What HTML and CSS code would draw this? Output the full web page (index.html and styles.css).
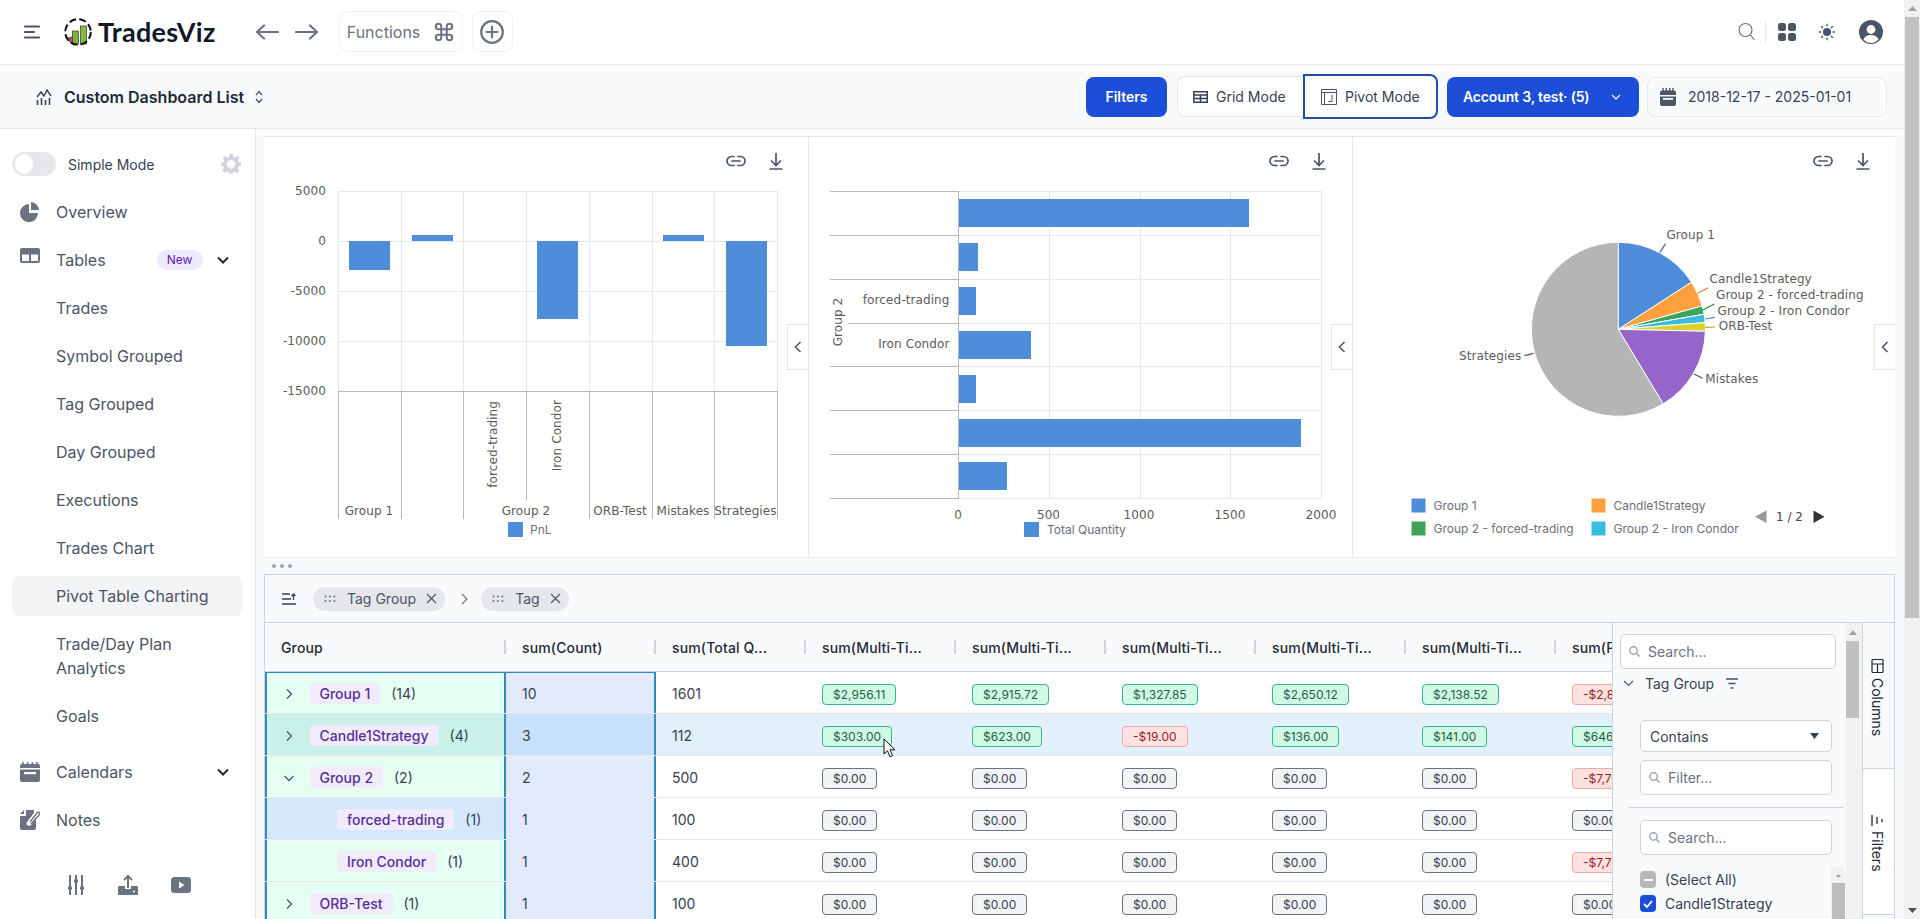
FILE: index.html
```html
<!DOCTYPE html>
<html lang="en">
<head>
<meta charset="utf-8">
<title>TradesViz</title>
<link rel="stylesheet" href="styles.css">
</head>
<body>
<div class="page">
  <header class="topbar">
    <svg class="burger" width="16" height="14" viewBox="0 0 16 14"><path d="M1 1.5h14M1 7h9M1 12.5h14" stroke="#4b5563" stroke-width="2.2" stroke-linecap="round" fill="none"/></svg>
    <svg class="logo" width="28" height="28" viewBox="0 0 28 28"><path d="M2 20l5 6 2-1V18z" fill="#a8525a"/><rect x="8.5" y="13" width="6" height="13" fill="#7fb23a" stroke="#333" stroke-width=".7"/><rect x="16.5" y="8" width="6" height="18" fill="#86b93e" stroke="#333" stroke-width=".7"/><circle cx="14" cy="14" r="12.8" fill="none" stroke="#111" stroke-width="2" stroke-dasharray="7 3.2"/></svg>
    <span class="brand">TradesViz</span>
    <svg class="arrow-l" width="24" height="16" viewBox="0 0 24 16"><path d="M23 8H2M9 1.5L2 8l7 6.500" fill="none" stroke="#6b7280" stroke-width="2.200" stroke-linecap="round" stroke-linejoin="round"/></svg>
    <svg class="arrow-r" width="24" height="16" viewBox="0 0 24 16"><path d="M1 8h21M15 1.500L22 8l-7 6.500" fill="none" stroke="#6b7280" stroke-width="2.200" stroke-linecap="round" stroke-linejoin="round"/></svg>
    <div class="fn-box"><span>Functions</span><svg width="22" height="22" viewBox="0 0 24 24"><path d="M18 3a3 3 0 0 0-3 3v12a3 3 0 0 0 3 3 3 3 0 0 0 3-3 3 3 0 0 0-3-3H6a3 3 0 0 0-3 3 3 3 0 0 0 3 3 3 3 0 0 0 3-3V6a3 3 0 0 0-3-3 3 3 0 0 0-3 3 3 3 0 0 0 3 3h12a3 3 0 0 0 3-3 3 3 0 0 0-3-3z" fill="none" stroke="#6b7280" stroke-width="2.200"/></svg></div>
    <div class="plus-box"><svg width="26" height="26" viewBox="0 0 26 26"><circle cx="13" cy="13" r="10.800" fill="none" stroke="#6b7280" stroke-width="2.200"/><path d="M13 7.500v11M7.500 13h11" stroke="#6b7280" stroke-width="2.200" stroke-linecap="round"/></svg></div>
    <div class="top-right">
      <svg width="20" height="20" viewBox="0 0 20 20"><circle cx="8.500" cy="8" r="6.500" fill="none" stroke="#6b7280" stroke-width="1.200"/><path d="M13.500 13l4 5" stroke="#6b7280" stroke-width="1.200"/></svg>
      <span class="top-sep"></span>
      <svg class="apps" width="20" height="20" viewBox="0 0 20 20" fill="#4b5563"><rect x="1" y="1" width="8" height="8" rx="2.500"/><rect x="11" y="1" width="8" height="8" rx="2.500"/><rect x="1" y="11" width="8" height="8" rx="2.500"/><rect x="11" y="11" width="8" height="8" rx="2.500"/></svg>
      <svg class="sun" width="18" height="18" viewBox="0 0 18 18"><circle cx="9" cy="9" r="4" fill="#4b5563"/><path d="M9 .8v2.400M9 14.800v2.400M.8 9h2.400M14.800 9h2.400M3.200 3.200l1.700 1.700M13.100 13.100l1.700 1.700M3.200 14.800l1.700-1.700M13.100 4.900l1.700-1.700" stroke="#4b5563" stroke-width="1.400"/></svg>
      <svg class="avatar" width="24" height="24" viewBox="0 0 24 24"><circle cx="12" cy="12" r="12" fill="#4b5563"/><circle cx="12" cy="9.500" r="4.400" fill="#fff"/><path d="M4.500 19.500c1.500-3.500 4.500-4.500 7.500-4.500s6 1 7.500 4.500C17.500 22 14.500 23 12 23s-5.500-1-7.500-3.500z" fill="#fff"/></svg>
    </div>
  </header>

  <div class="subbar">
    <svg class="dash-ico" width="16" height="16" viewBox="0 0 16 16"><path d="M1 8l4-5 3 4 3-6 4 6" fill="none" stroke="#374151" stroke-width="1.400"/><path d="M1.500 11v5M5.500 9v7M9.500 11v5M13.500 9v7" stroke="#374151" stroke-width="1.600"/></svg>
    <span class="dash-title">Custom Dashboard List</span>
    <svg class="updown" width="8" height="14" viewBox="0 0 8 14"><path d="M1 5l3-3.500L7 5M1 9l3 3.500L7 9" fill="none" stroke="#4b5563" stroke-width="1.300"/></svg>
    <div class="sub-actions">
      <button class="btn-primary btn-filters">Filters</button>
      <div class="mode-group">
        <button class="mode mode-grid"><svg width="15" height="12" viewBox="0 0 15 12"><path d="M.8.800h13.400v10.400H.8zM.8 4h13.400M.8 7.500h13.400M7.500 4v7" fill="none" stroke="#374151" stroke-width="1.500"/></svg>Grid Mode</button>
        <button class="mode mode-pivot"><svg width="16" height="16" viewBox="0 0 16 16"><path d="M.5.500h15v15H.500zM3.500 3.500v12M.5 3.500h15M11 6v6.500H7.500" fill="none" stroke="#4b5563" stroke-width="1"/></svg>Pivot Mode</button>
      </div>
      <button class="btn-primary btn-account"><span>Account 3, test· (5)</span><svg width="10" height="6" viewBox="0 0 10 6"><path d="M1 1l4 4 4-4" fill="none" stroke="#fff" stroke-width="1.200"/></svg></button>
      <div class="date-box"><svg width="16" height="20" viewBox="0 0 16 20"><path d="M3 1v3M6.300 1v3M9.700 1v3M13 1v3" stroke="#4b5563" stroke-width="1.400"/><path d="M0 5.500a2 2 0 0 1 2-2h12a2 2 0 0 1 2 2V8H0zM0 9.500h16V17a2 2 0 0 1-2 2H2a2 2 0 0 1-2-2z" fill="#4b5563"/><rect x="3" y="11" width="10" height="1.800" fill="#fff"/></svg><span>2018-12-17 - 2025-01-01</span></div>
    </div>
  </div>

  <div class="layout">
    <aside class="sidebar">
      <div class="simple-row">
        <span class="toggle"><span class="knob"></span></span>
        <span class="simple-label">Simple Mode</span>
        <svg class="gear" width="20" height="20" viewBox="0 0 20 20"><path fill-rule="evenodd" d="M8.300 0h3.400l.5 2.700 1.700.7 2.300-1.600 2.400 2.400-1.600 2.300.7 1.700L20 8.700v3.400l-2.700.5-.7 1.700 1.600 2.300-2.400 2.400-2.300-1.600-1.700.7-.5 2.700H8.300l-.5-2.700-1.700-.7-2.300 1.600-2.400-2.400 1.600-2.300-.7-1.700L0 12.100V8.700l2.700-.5.7-1.700-1.600-2.300 2.400-2.400 2.300 1.600 1.700-.7zM10 6a4.200 4.200 0 1 0 0 8.400A4.200 4.200 0 0 0 10 6z" fill="#d1d5db"/></svg>
      </div>
      <nav class="nav">
        <a class="nav-item"><svg class="nav-ico" width="20" height="20" viewBox="0 0 20 20" fill="#6b7280"><path d="M9 2.100A9 9 0 1 0 18 11H9z"/><path d="M11 0a9 9 0 0 1 8 8h-8z"/></svg><span>Overview</span></a>
        <a class="nav-item"><svg class="nav-ico ico-up" width="20" height="15" viewBox="0 0 20 15"><rect width="20" height="15" rx="2" fill="#6b7280"/><rect x="2" y="6.500" width="7" height="6.500" fill="#fff"/><rect x="11" y="6.500" width="7" height="6.500" fill="#fff"/></svg><span>Tables</span><span class="new-badge">New</span><svg class="nav-chev" width="12" height="8" viewBox="0 0 12 8"><path d="M1 1.500l5 5 5-5" fill="none" stroke="#1f2937" stroke-width="2"/></svg></a>
        <a class="nav-item">Trades</a>
        <a class="nav-item">Symbol Grouped</a>
        <a class="nav-item">Tag Grouped</a>
        <a class="nav-item">Day Grouped</a>
        <a class="nav-item">Executions</a>
        <a class="nav-item">Trades Chart</a>
        <a class="nav-item nav-active">Pivot Table Charting</a>
        <a class="nav-item nav-tall">Trade/Day Plan<br>Analytics</a>
        <a class="nav-item">Goals</a>
        <a class="nav-item nav-gap"><svg class="nav-ico" width="20" height="20" viewBox="0 0 20 20"><path d="M3 0v3M7.700 0v3M12.300 0v3M17 0v3" stroke="#6b7280" stroke-width="1.600"/><path d="M0 4a2 2 0 0 1 2-2h16a2 2 0 0 1 2 2v2H0zM0 7.500h20V18a2 2 0 0 1-2 2H2a2 2 0 0 1-2-2z" fill="#6b7280"/><rect x="4" y="10" width="12" height="2.200" fill="#fff"/></svg><span>Calendars</span><svg class="nav-chev" width="12" height="8" viewBox="0 0 12 8"><path d="M1 1.500l5 5 5-5" fill="none" stroke="#1f2937" stroke-width="2"/></svg></a>
        <a class="nav-item"><svg class="nav-ico" width="20" height="20" viewBox="0 0 20 20"><path d="M4 0v4H0zM6 0h8v3L7 12c-1.500 3 2 5 4 3l5-6v9a2 2 0 0 1-2 2H2a2 2 0 0 1-2-2V6h6z" fill="#6b7280"/><path d="M10 12l7-9c1.500-2 3.500 0 2 2l-8 9" fill="none" stroke="#6b7280" stroke-width="1.300"/></svg><span>Notes</span></a>
      </nav>
      <div class="side-foot">
        <svg width="18" height="20" viewBox="0 0 18 20"><path d="M3 0v20M9 0v20M15 0v20" stroke="#6b7280" stroke-width="2"/><rect x="1" y="11" width="4" height="4" rx="1.500" fill="#6b7280"/><rect x="7" y="4" width="4" height="4" rx="1.500" fill="#6b7280"/><rect x="13" y="11" width="4" height="4" rx="1.500" fill="#6b7280"/></svg>
        <svg width="20" height="20" viewBox="0 0 20 20"><path d="M10 13V1.500M6 5l4-4 4 4" fill="none" stroke="#6b7280" stroke-width="2"/><path d="M0 12a1 1 0 0 1 1-1h6v3h6v-3h6a1 1 0 0 1 1 1v7a1 1 0 0 1-1 1H1a1 1 0 0 1-1-1z" fill="#6b7280"/><circle cx="16" cy="16.500" r="1" fill="#fff"/></svg>
        <svg width="20" height="16" viewBox="0 0 20 16"><rect width="20" height="16" rx="3.500" fill="#6b7280"/><path d="M8 4.500l5.500 3.500L8 11.500z" fill="#fff"/></svg>
      </div>
    </aside>

    <main class="main">
      <section class="charts">
        <div class="chart-panel">
          <div class="chart-actions">
            <svg width="24" height="24" viewBox="0 0 24 24"><path d="M10 7.500H7.500a4.500 4.500 0 0 0 0 9H10M14 7.500h2.500a4.500 4.500 0 0 1 0 9H14M8 12h8" fill="none" stroke="#4b5563" stroke-width="1.700" stroke-linecap="round"/></svg>
            <svg width="24" height="24" viewBox="0 0 24 24"><path d="M12 4v12.500M7 11.500l5 5 5-5M5.500 20h13" fill="none" stroke="#4b5563" stroke-width="1.700"/></svg>
          </div>
          <svg class="chart" width="544" height="380" viewBox="264 177 544 380">
            <g class="grid-lines">
              <path d="M338 191.500H777M338 241.500H777M338 291.500H777M338 341.500H777M338.500 191V391M401.500 191V391M463.500 191V391M526.500 191V391M589.500 191V391M652.500 191V391M714.500 191V391M777.500 191V391"/>
            </g>
            <g class="bars">
              <rect x="349" y="241" width="41" height="29"/>
              <rect x="412" y="235" width="41" height="6"/>
              <rect x="537" y="241" width="41" height="78"/>
              <rect x="663" y="235" width="41" height="6"/>
              <rect x="726" y="241" width="41" height="105"/>
            </g>
            <path class="ticks" d="M338 391.500H778M338.500 391V519M401.500 391V519M463.500 391V519M526.500 391V501M589.500 391V519M652.500 391V519M714.500 391V519M777.500 391V519"/>
            <g class="axis-text end">
              <text x="326" y="195">5000</text>
              <text x="326" y="245">0</text>
              <text x="326" y="295">-5000</text>
              <text x="326" y="345">-10000</text>
              <text x="326" y="395">-15000</text>
            </g>
            <g class="axis-text mid">
              <text x="369" y="515">Group 1</text>
              <text x="526" y="515">Group 2</text>
              <text x="620" y="515">ORB-Test</text>
              <text x="683" y="515">Mistakes</text>
              <text x="745.500" y="515">Strategies</text>
            </g>
            <g class="axis-text end">
              <text transform="translate(497 401) rotate(-90)">forced-trading</text>
              <text transform="translate(561 400) rotate(-90)">Iron Condor</text>
            </g>
            <rect class="swatch" x="508" y="522" width="15" height="15"/>
            <text class="legend-text" x="530" y="533.500">PnL</text>
          </svg>
          <div class="collapse-tab"><svg width="8" height="12" viewBox="0 0 8 12"><path d="M6.500 1L1.500 6l5 5" fill="none" stroke="#4b5563" stroke-width="1.500"/></svg></div>
        </div>

        <div class="chart-panel chart-panel-b chart-panel-mid">
          <div class="chart-actions">
            <svg width="24" height="24" viewBox="0 0 24 24"><path d="M10 7.500H7.500a4.500 4.500 0 0 0 0 9H10M14 7.500h2.500a4.500 4.500 0 0 1 0 9H14M8 12h8" fill="none" stroke="#4b5563" stroke-width="1.700" stroke-linecap="round"/></svg>
            <svg width="24" height="24" viewBox="0 0 24 24"><path d="M12 4v12.500M7 11.500l5 5 5-5M5.500 20h13" fill="none" stroke="#4b5563" stroke-width="1.700"/></svg>
          </div>
          <svg class="chart" width="543" height="380" viewBox="809 177 543 380">
            <g class="grid-lines">
              <path d="M958 191.500H1321M958 235.500H1321M958 279.500H1321M958 323.500H1321M958 366.500H1321M958 410.500H1321M958 454.500H1321M958 498.500H1321M1049.500 191V498M1140.500 191V498M1230.500 191V498M1321.500 191V498"/>
            </g>
            <g class="bars">
              <rect x="958" y="199" width="291" height="28"/>
              <rect x="958" y="243" width="20" height="28"/>
              <rect x="958" y="287" width="18" height="28"/>
              <rect x="958" y="331" width="73" height="28"/>
              <rect x="958" y="375" width="18" height="28"/>
              <rect x="958" y="419" width="343" height="28"/>
              <rect x="958" y="462" width="49" height="28"/>
            </g>
            <path class="ticks" d="M830 191.500H958M830 235.500H958M830 279.500H958M848 323.500H958M830 366.500H958M830 410.500H958M830 454.500H958M830 498.500H958M958.500 191V499"/>
            <g class="axis-text end">
              <text x="949.500" y="303.500">forced-trading</text>
              <text x="949.500" y="347.500">Iron Condor</text>
            </g>
            <g class="axis-text mid">
              <text transform="translate(842 322) rotate(-90)">Group 2</text>
              <text x="958" y="519">0</text>
              <text x="1048.500" y="519">500</text>
              <text x="1139" y="519">1000</text>
              <text x="1230" y="519">1500</text>
              <text x="1321" y="519">2000</text>
            </g>
            <rect class="swatch" x="1024" y="522" width="15" height="15"/>
            <text class="legend-text" x="1047" y="533.500">Total Quantity</text>
          </svg>
          <div class="collapse-tab"><svg width="8" height="12" viewBox="0 0 8 12"><path d="M6.500 1L1.500 6l5 5" fill="none" stroke="#4b5563" stroke-width="1.500"/></svg></div>
        </div>

        <div class="chart-panel chart-panel-b">
          <div class="chart-actions">
            <svg width="24" height="24" viewBox="0 0 24 24"><path d="M10 7.500H7.500a4.500 4.500 0 0 0 0 9H10M14 7.500h2.500a4.500 4.500 0 0 1 0 9H14M8 12h8" fill="none" stroke="#4b5563" stroke-width="1.700" stroke-linecap="round"/></svg>
            <svg width="24" height="24" viewBox="0 0 24 24"><path d="M12 4v12.500M7 11.500l5 5 5-5M5.500 20h13" fill="none" stroke="#4b5563" stroke-width="1.700"/></svg>
          </div>
          <svg class="chart" width="542" height="380" viewBox="1353 177 542 380">
            <g stroke="#fff" stroke-width="1">
              <path fill="#b5b5b5" d="M1618.400 329.300L1663.300 403.800A87 87 0 1 1 1618.400 242.300Z"/>
              <path fill="#4f8ddb" d="M1618.400 329.300L1618.400 242.300A87 87 0 0 1 1691.500 282.200Z"/>
              <path fill="#ff9f3d" d="M1618.400 329.300L1691.500 282.200A87 87 0 0 1 1702.200 305.900Z"/>
              <path fill="#3fa45b" d="M1618.400 329.300L1702.200 305.900A87 87 0 0 1 1704.100 314.200Z"/>
              <path fill="#38bde0" d="M1618.400 329.300L1704.100 314.200A87 87 0 0 1 1705.100 322.600Z"/>
              <path fill="#dbd02c" d="M1618.400 329.300L1705.100 322.600A87 87 0 0 1 1705.400 331.300Z"/>
              <path fill="#9565c9" d="M1618.400 329.300L1705.400 331.300A87 87 0 0 1 1663.300 403.800Z"/>
            </g>
            <g fill="none" stroke-width="1.200">
              <path stroke="#3c6ea8" d="M1659.800 252.700L1665.600 243.700"/>
              <path stroke="#d98428" d="M1698 293.300L1708 287.700"/>
              <path stroke="#2f8048" d="M1702.700 310L1714.400 304"/>
              <path stroke="#3a8fb0" d="M1705.300 319L1714.700 317.300"/>
              <path stroke="#c0a818" d="M1705.300 327.300L1715 327"/>
              <path stroke="#5a4a70" d="M1694 374L1702.700 378.300"/>
              <path stroke="#555" d="M1533.600 353.300L1524.500 355.700"/>
            </g>
            <g class="axis-text">
              <text x="1666.400" y="239">Group 1</text>
              <text x="1709.600" y="282.500">Candle1Strategy</text>
              <text x="1716" y="298.500">Group 2 - forced-trading</text>
              <text x="1717.600" y="314.500">Group 2 - Iron Condor</text>
              <text x="1718.700" y="330">ORB-Test</text>
              <text x="1705.300" y="382.500">Mistakes</text>
              <text x="1521.300" y="360" text-anchor="end">Strategies</text>
            </g>
            <rect x="1411.500" y="498.500" width="14" height="14" fill="#4f8ddb"/>
            <rect x="1591.500" y="498.500" width="14" height="14" fill="#ff9f3d"/>
            <rect x="1411.500" y="521.500" width="14" height="14" fill="#3fa45b"/>
            <rect x="1591.500" y="521.500" width="14" height="14" fill="#38bde0"/>
            <text class="legend-text" x="1433.500" y="510">Group 1</text>
            <text class="legend-text" x="1613.500" y="510">Candle1Strategy</text>
            <text class="legend-text" x="1433.500" y="533">Group 2 - forced-trading</text>
            <text class="legend-text" x="1613.500" y="533">Group 2 - Iron Condor</text>
            <path d="M1766.500 510.500v12.500l-11.500-6.200z" fill="#999"/>
            <text class="page-text" x="1776" y="521">1 / 2</text>
            <path d="M1813.500 510.500v12.500l11-6.200z" fill="#333"/>
          </svg>
          <div class="collapse-tab"><svg width="8" height="12" viewBox="0 0 8 12"><path d="M6.500 1L1.500 6l5 5" fill="none" stroke="#4b5563" stroke-width="1.500"/></svg></div>
        </div>
      </section>

      <div class="resize-handle"><span></span><span></span><span></span></div>

      <section class="grid">
        <div class="group-bar">
          <svg width="14" height="12" viewBox="0 0 14 12"><path d="M0 1h8M0 6h9M0 11h14M11.500 7V1.500M9.500 3l2-2 2 2" fill="none" stroke="#374151" stroke-width="1.300"/></svg>
          <span class="pill"><svg class="dots" width="12" height="8" viewBox="0 0 12 8" fill="#6b7280"><circle cx="1.500" cy="1.500" r="1"/><circle cx="6" cy="1.500" r="1"/><circle cx="10.500" cy="1.500" r="1"/><circle cx="1.500" cy="6" r="1"/><circle cx="6" cy="6" r="1"/><circle cx="10.500" cy="6" r="1"/></svg>Tag Group<svg class="pill-x" width="11" height="11" viewBox="0 0 11 11"><path d="M1 1l9 9M10 1l-9 9" stroke="#4b5563" stroke-width="1.200"/></svg></span>
          <svg class="bar-chev" width="7" height="12" viewBox="0 0 7 12"><path d="M1 1l5 5-5 5" fill="none" stroke="#6b7280" stroke-width="1.100"/></svg>
          <span class="pill"><svg class="dots" width="12" height="8" viewBox="0 0 12 8" fill="#6b7280"><circle cx="1.500" cy="1.500" r="1"/><circle cx="6" cy="1.500" r="1"/><circle cx="10.500" cy="1.500" r="1"/><circle cx="1.500" cy="6" r="1"/><circle cx="6" cy="6" r="1"/><circle cx="10.500" cy="6" r="1"/></svg>Tag<svg class="pill-x" width="11" height="11" viewBox="0 0 11 11"><path d="M1 1l9 9M10 1l-9 9" stroke="#4b5563" stroke-width="1.200"/></svg></span>
        </div>
        <div class="grid-content">
          <div class="table">
            <div class="head-row">
              <div class="hcell c-group"><span>Group</span><i class="sep"></i></div>
              <div class="hcell"><span>sum(Count)</span><i class="sep"></i></div>
              <div class="hcell"><span>sum(Total Q...</span><i class="sep"></i></div>
              <div class="hcell"><span>sum(Multi-Ti...</span><i class="sep"></i></div>
              <div class="hcell"><span>sum(Multi-Ti...</span><i class="sep"></i></div>
              <div class="hcell"><span>sum(Multi-Ti...</span><i class="sep"></i></div>
              <div class="hcell"><span>sum(Multi-Ti...</span><i class="sep"></i></div>
              <div class="hcell"><span>sum(Multi-Ti...</span><i class="sep"></i></div>
              <div class="hcell"><span>sum(PnL)</span><i class="sep"></i></div>
            </div>

            <div class="row">
              <div class="cell c-group sel sel-top"><svg class="exp" width="12" height="12" viewBox="0 0 12 12"><path d="M4 1.500L8.500 6 4 10.500" fill="none" stroke="#4b5563" stroke-width="1.300"/></svg><span class="tag">Group 1</span><span class="cnt">(14)</span></div>
              <div class="cell c-count sel-top">10</div>
              <div class="cell">1601</div>
              <div class="cell"><span class="chip up">$2,956.11</span></div>
              <div class="cell"><span class="chip up">$2,915.72</span></div>
              <div class="cell"><span class="chip up">$1,327.85</span></div>
              <div class="cell"><span class="chip up">$2,650.12</span></div>
              <div class="cell"><span class="chip up">$2,138.52</span></div>
              <div class="cell"><span class="chip down">-$2,846.00</span></div>
            </div>
            <div class="row row-hover">
              <div class="cell c-group sel"><svg class="exp" width="12" height="12" viewBox="0 0 12 12"><path d="M4 1.500L8.500 6 4 10.500" fill="none" stroke="#4b5563" stroke-width="1.300"/></svg><span class="tag">Candle1Strategy</span><span class="cnt">(4)</span></div>
              <div class="cell c-count">3</div>
              <div class="cell">112</div>
              <div class="cell cursor-cell"><span class="chip up">$303.00</span><svg class="cursor" width="13" height="20" viewBox="0 0 13 20"><path d="M1 1v15l3.500-3.200 2.500 6 2.500-1-2.500-6H12z" fill="#fff" stroke="#111" stroke-width="1"/></svg></div>
              <div class="cell"><span class="chip up">$623.00</span></div>
              <div class="cell"><span class="chip down">-$19.00</span></div>
              <div class="cell"><span class="chip up">$136.00</span></div>
              <div class="cell"><span class="chip up">$141.00</span></div>
              <div class="cell"><span class="chip up">$646.00</span></div>
            </div>
            <div class="row">
              <div class="cell c-group sel"><svg class="exp" width="12" height="12" viewBox="0 0 12 12"><path d="M1.500 4L6 8.500 10.500 4" fill="none" stroke="#4b5563" stroke-width="1.300"/></svg><span class="tag">Group 2</span><span class="cnt">(2)</span></div>
              <div class="cell c-count">2</div>
              <div class="cell">500</div>
              <div class="cell"><span class="chip zero">$0.00</span></div>
              <div class="cell"><span class="chip zero">$0.00</span></div>
              <div class="cell"><span class="chip zero">$0.00</span></div>
              <div class="cell"><span class="chip zero">$0.00</span></div>
              <div class="cell"><span class="chip zero">$0.00</span></div>
              <div class="cell"><span class="chip down">-$7,763.00</span></div>
            </div>
            <div class="row">
              <div class="cell c-group sel child child-focus"><span class="tag">forced-trading</span><span class="cnt">(1)</span></div>
              <div class="cell c-count">1</div>
              <div class="cell">100</div>
              <div class="cell"><span class="chip zero">$0.00</span></div>
              <div class="cell"><span class="chip zero">$0.00</span></div>
              <div class="cell"><span class="chip zero">$0.00</span></div>
              <div class="cell"><span class="chip zero">$0.00</span></div>
              <div class="cell"><span class="chip zero">$0.00</span></div>
              <div class="cell"><span class="chip zero">$0.00</span></div>
            </div>
            <div class="row">
              <div class="cell c-group sel child"><span class="tag">Iron Condor</span><span class="cnt">(1)</span></div>
              <div class="cell c-count">1</div>
              <div class="cell">400</div>
              <div class="cell"><span class="chip zero">$0.00</span></div>
              <div class="cell"><span class="chip zero">$0.00</span></div>
              <div class="cell"><span class="chip zero">$0.00</span></div>
              <div class="cell"><span class="chip zero">$0.00</span></div>
              <div class="cell"><span class="chip zero">$0.00</span></div>
              <div class="cell"><span class="chip down">-$7,763.00</span></div>
            </div>
            <div class="row">
              <div class="cell c-group sel"><svg class="exp" width="12" height="12" viewBox="0 0 12 12"><path d="M4 1.500L8.500 6 4 10.500" fill="none" stroke="#4b5563" stroke-width="1.300"/></svg><span class="tag">ORB-Test</span><span class="cnt">(1)</span></div>
              <div class="cell c-count">1</div>
              <div class="cell">100</div>
              <div class="cell"><span class="chip zero">$0.00</span></div>
              <div class="cell"><span class="chip zero">$0.00</span></div>
              <div class="cell"><span class="chip zero">$0.00</span></div>
              <div class="cell"><span class="chip zero">$0.00</span></div>
              <div class="cell"><span class="chip zero">$0.00</span></div>
              <div class="cell"><span class="chip zero">$0.00</span></div>
            </div>
          </div>

          <div class="tool-panel">
            <div class="tool-body">
              <div class="field field-top"><svg width="11" height="11" viewBox="0 0 11 11"><circle cx="4.500" cy="4.500" r="3.700" fill="none" stroke="#9ca3af" stroke-width="1.400"/><path d="M7.500 7.500l3 3" stroke="#9ca3af" stroke-width="1.400"/></svg><span>Search...</span></div>
              <div class="tg-row"><svg width="11" height="7" viewBox="0 0 11 7"><path d="M1 1l4.500 4.500L10 1" fill="none" stroke="#4b5563" stroke-width="1.200"/></svg><span class="tg-label">Tag Group</span><svg width="14" height="11" viewBox="0 0 14 11"><path d="M1 1h12M3.500 5.500h7M5.500 10h3" stroke="#4b5563" stroke-width="1.300"/></svg></div>
              <div class="select"><span>Contains</span><svg width="9" height="6" viewBox="0 0 9 6"><path d="M0 0h9L4.500 6z" fill="#374151"/></svg></div>
              <div class="field field-sub"><svg width="11" height="11" viewBox="0 0 11 11"><circle cx="4.500" cy="4.500" r="3.700" fill="none" stroke="#9ca3af" stroke-width="1.400"/><path d="M7.500 7.500l3 3" stroke="#9ca3af" stroke-width="1.400"/></svg><span>Filter...</span></div>
              <div class="tool-hr"></div>
              <div class="field field-sub"><svg width="11" height="11" viewBox="0 0 11 11"><circle cx="4.500" cy="4.500" r="3.700" fill="none" stroke="#9ca3af" stroke-width="1.400"/><path d="M7.500 7.500l3 3" stroke="#9ca3af" stroke-width="1.400"/></svg><span>Search...</span></div>
              <div class="check-list">
                <div class="checks">
                  <div class="check-row"><span class="box box-mixed"><i></i></span>(Select All)</div>
                  <div class="check-row"><span class="box box-on"><svg width="10" height="8" viewBox="0 0 10 8"><path d="M1 4l3 3 5-6" fill="none" stroke="#fff" stroke-width="1.800"/></svg></span>Candle1Strategy</div>
                </div>
                <div class="mini-bar"><svg width="7" height="4" viewBox="0 0 7 4"><path d="M0 4L3.500 0 7 4z" fill="#a3a3a3"/></svg><span class="mini-thumb"></span></div>
              </div>
            </div>
            <div class="tool-bar"><svg width="8" height="5" viewBox="0 0 8 5"><path d="M0 5L4 0l4 5z" fill="#a3a3a3"/></svg><span class="tool-thumb"></span></div>
          </div>
          <div class="side-tabs">
            <div class="side-tab"><svg width="13" height="14" viewBox="0 0 13 14"><path d="M1 1.500a1 1 0 0 1 1-1h9a1 1 0 0 1 1 1v11a1 1 0 0 1-1 1H2a1 1 0 0 1-1-1zM1 5h11M6.500 5v8.500" fill="none" stroke="#1f2937" stroke-width="1.200"/></svg><span>Columns</span></div>
            <div class="side-tab side-tab-on"><svg width="13" height="11" viewBox="0 0 13 11"><path d="M1 0v11M6 2v7M11 4v3" stroke="#1f2937" stroke-width="1.300"/></svg><span>Filters</span></div>
          </div>
        </div>
      </section>
    </main>
  </div>
</div>
<div class="vbar">
  <span class="vbar-arrow"><svg width="9" height="5" viewBox="0 0 9 5"><path d="M0 5L4.500 0 9 5z" fill="#a3a3a3"/></svg></span>
  <span class="vbar-thumb"></span>
  <span class="vbar-arrow"><svg width="9" height="5" viewBox="0 0 9 5"><path d="M0 0l4.500 5L9 0z" fill="#505050"/></svg></span>
</div>
</body>
</html>
```

FILE: styles.css
```css
* { box-sizing: border-box; }
html, body { height: 100%; }
body {
  margin: 0;
  display: flex;
  height: 919px;
  overflow: hidden;
  background: #f9fafb;
  font-family: Inter, "Liberation Sans", sans-serif;
  font-size: 14px;
  color: #374151;
}
button { font-family: inherit; cursor: pointer; }

.page { flex: 1; min-width: 0; height: 919px; overflow: hidden; display: flex; flex-direction: column; }

/* browser scrollbar */
.vbar { width: 16px; flex: none; background: #f1f1f1; display: flex; flex-direction: column; }
.vbar-arrow { height: 17px; display: flex; align-items: center; justify-content: center; flex: none; }
.vbar-thumb { height: 601px; margin: 0 1px; background: #c1c1c1; }
.vbar-arrow:last-child { margin-top: auto; }

/* top bar */
.topbar {
  flex: none; height: 65px; background: #fff; border-bottom: 1px solid #e5e7eb;
  display: flex; align-items: center; padding: 0 21px 1px 24px;
}
.logo { margin-left: 24px; }
.brand { margin-left: 6px; font-family: Lato, "Noto Sans", sans-serif; font-size: 27px; font-weight: 700; color: #111827; line-height: 1; letter-spacing: .3px; }
.arrow-l { margin-left: 39px; }
.arrow-r { margin-left: 16px; }
.fn-box {
  margin-left: 20px; width: 124px; height: 41px; border: 1px solid #eef0f3; border-radius: 9px;
  display: flex; align-items: center; justify-content: space-between; padding: 0 7px 0 7px;
  font-size: 16px; color: #6b7280;
}
.plus-box {
  margin-left: 9px; width: 41px; height: 41px; border: 1px solid #eef0f3; border-radius: 9px;
  display: flex; align-items: center; justify-content: center;
}
.top-right { margin-left: auto; display: flex; align-items: center; }
.top-sep { width: 1px; height: 22px; background: #e5e7eb; margin: 0 11px 0 8px; }
.sun { margin-left: 21px; }
.avatar { margin-left: 23px; }

/* sub bar */
.subbar {
  flex: none; height: 64px; border-bottom: 1px solid #e5e7eb; background: #f9fafb;
  display: flex; align-items: center; padding: 0 17px 0 36px;
}
.dash-title { margin-left: 12px; font-size: 16px; font-weight: 600; color: #1f2937; }
.updown { margin-left: 11px; }
.sub-actions { margin-left: auto; display: flex; align-items: center; }
.btn-primary {
  height: 40px; border: 0; border-radius: 8px; background: #1d4ed8; color: #fff;
  font-size: 14px; font-weight: 600; display: flex; align-items: center;
}
.btn-filters { width: 81px; justify-content: center; margin-right: 10px; }
.mode-group { display: flex; align-items: center; margin-right: 9px; }
.mode {
  background: #fff; font-size: 14px; color: #374151; display: flex; align-items: center; padding: 0;
}
.mode-grid { width: 126px; height: 41px; border: 1px solid #e5e7eb; border-right: 0; border-radius: 8px 0 0 8px; padding-left: 15px; gap: 8px; }
.mode-pivot { width: 135px; height: 45px; border: 2px solid #1e4fa3; border-radius: 0 8px 8px 0; padding-left: 16px; gap: 8px; }
.btn-account { width: 192px; padding: 0 18px 0 16px; justify-content: space-between; margin-right: 8px; letter-spacing: -.15px; }
.date-box {
  width: 240px; height: 40px; border: 1px solid #e5e7eb; border-radius: 8px; background: #f9fafb;
  display: flex; align-items: center; gap: 12px; padding-left: 12px; font-size: 14px; color: #374151;
}

/* layout */
.layout { flex: 1; min-height: 0; display: flex; }

/* sidebar */
.sidebar {
  flex: none; width: 256px; background: #fff; border-right: 1px solid #e5e7eb;
  display: flex; flex-direction: column; padding: 23px 12px 24px;
}
.simple-row { display: flex; align-items: center; height: 24px; }
.toggle { width: 44px; height: 24px; border-radius: 12px; background: #e5e7eb; border: 1px solid #e5e7eb; display: flex; align-items: center; padding-left: 2px; }
.knob { width: 18px; height: 20px; border-radius: 50%; background: #fff; }
.simple-label { margin-left: 12px; font-size: 14px; color: #374151; }
.gear { margin-left: auto; margin-right: 2px; }
.nav { margin-top: 16px; display: flex; flex-direction: column; gap: 8px; }
.nav-item {
  display: flex; align-items: center; height: 40px; padding-left: 44px; border-radius: 8px;
  font-size: 16px; line-height: 24px; color: #4b5563; position: relative;
}
.nav-active { background: #f3f4f6; }
.nav-tall { height: 64px; display: block; padding-top: 8px; }
.nav-gap { margin-top: 8px; }
.nav-ico { margin-left: -36px; margin-right: 16px; flex: none; }
.ico-up { margin-top: -10px; }
.new-badge { margin-left: 51px; width: 46px; height: 20px; border-radius: 10px; background: #ede9fe; color: #5b21b6; font-size: 12px; display: flex; align-items: center; justify-content: center; }
.nav-chev { position: absolute; left: 205px; top: 16px; }
.side-foot { margin-top: auto; display: flex; align-items: center; gap: 33px; padding-left: 55px; height: 20px; }

/* main */
.main { flex: 1; min-width: 0; padding: 7px 9px 0 8px; display: flex; flex-direction: column; overflow: hidden; }

/* charts */
.charts {
  flex: none; height: 422px; display: grid; grid-template-columns: 544px 544px 1fr;
  background: #fff; border-top: 1px solid #e5e7eb; border-bottom: 1px solid #e5e7eb;
}
.chart-panel { position: relative; display: flex; flex-direction: column; overflow: hidden; }
.chart-panel-b { border-left: 1px solid #e5e7eb; }
.chart-actions { flex: none; height: 40px; display: flex; justify-content: flex-end; align-items: flex-start; gap: 16px; padding: 12px 20px 0 0; }
.chart-panel-mid .chart-actions { padding-right: 21px; }
.chart { display: block; flex: none; }
.collapse-tab {
  position: absolute; right: 0; top: 187px; width: 21px; height: 46px;
  border: 1px solid #e5e7eb; border-right: 0; background: #fff;
  display: flex; align-items: center; justify-content: center;
}
.grid-lines path { stroke: #e4e9f0; stroke-width: 1; fill: none; }
.bars rect, .swatch { fill: #4f8ddb; }
.ticks { stroke: #b8b8b8; stroke-width: 1; fill: none; }
.axis-text text { font-family: "DejaVu Sans", sans-serif; font-size: 12px; fill: #5c5c5c; letter-spacing: .1px; }
.axis-text.end text { text-anchor: end; }
.axis-text.mid text { text-anchor: middle; }
.legend-text { font-family: Inter, sans-serif; font-size: 12px; fill: #6e7079; }
.page-text { font-family: "DejaVu Sans", sans-serif; font-size: 12px; fill: #444; }

.resize-handle { flex: none; height: 16px; display: flex; align-items: center; gap: 4px; padding-left: 8px; }
.resize-handle span { width: 4px; height: 4px; border-radius: 50%; background: #9ca3af; }

/* data grid */
.grid { flex: none; height: 400px; background: #fff; border: 1px solid #cbd5e1; display: flex; flex-direction: column; }
.group-bar {
  flex: none; height: 48px; background: #f9fafb; border-bottom: 1px solid #cbd5e1;
  display: flex; align-items: center; padding-left: 17px;
}
.pill {
  height: 24px; border-radius: 12px; background: #e5e7eb; display: flex; align-items: center;
  padding: 0 8px 0 11px; font-size: 14px; color: #4b5563; margin-left: 17px;
}
.dots { margin-right: 11px; }
.pill-x { margin-left: 10px; }
.bar-chev { margin-left: 16px; margin-right: -4px; }
.grid-content { flex: 1; min-height: 0; display: flex; }
.table { flex: 1; min-width: 0; overflow: hidden; }
.head-row { height: 49px; display: flex; background: #f9fafb; border-bottom: 1px solid #cbd5e1; }
.hcell {
  flex: none; width: 150px; display: flex; align-items: center; justify-content: space-between;
  padding-left: 16px; font-size: 14px; font-weight: 500; color: #1f2937; white-space: nowrap; letter-spacing: .15px;
}
.sep { flex: none; width: 2px; height: 14px; background: #d1d5db; margin-right: 0; }
.row { height: 42px; display: flex; background: #fff; border-bottom: 1px solid #e5e7eb; }
.cell { flex: none; width: 150px; height: 41px; display: flex; align-items: center; padding: 2px 0 0 16px; font-size: 14px; color: #374151; position: relative; white-space: nowrap; }
.c-group { width: 241px; }
.sel { background: #e5fff3; border-left: 2px solid #2f8cbc; border-right: 2px solid #2f8cbc; padding-left: 16px; }
.c-count { background: #e2ebfd; border-right: 2px solid #2f8cbc; }
.sel-top { border-top: 1px solid #2f8cbc; padding-top: 1px; }
.row-hover { background: #e2f0fb; }
.row-hover .sel { background: #c9f1ea; }
.row-hover .c-count { background: #c9e0fa; }
.child { padding-left: 70px; }
.child-focus { background: #d5e8fb; }
.exp { flex: none; margin-right: 14.500px; }
.tag { height: 21px; padding: 0 10px; border-radius: 4px; background: #f1ebfb; color: #54309c; font-weight: 500; display: flex; align-items: center; }
.cnt { margin-left: 11px; color: #374151; }
.chip { height: 21px; margin-top: 2px; padding: 0 10px; border: 1px solid; border-radius: 4px; font-size: 12px; display: flex; align-items: center; }
.up { background: #d1fae5; border-color: #34b58a; color: #1f5f4a; }
.down { background: #fee2e2; border-color: #f5a9a9; color: #991b1b; }
.zero { background: #f3f4f6; border-color: #6b7280; color: #374151; }
.cursor { position: absolute; left: 77px; top: 24px; z-index: 2; }

/* tool panel */
.tool-panel { flex: none; width: 250px; display: flex; background: #f9fafb; border-left: 1px solid #cbd5e1; }
.tool-body { flex: 1; min-width: 0; padding: 11px 0 0 7px; display: flex; flex-direction: column; }
.field {
  flex: none; display: flex; align-items: center; gap: 8px; height: 35px; background: #fff;
  border: 1px solid #d1d5db; border-radius: 5px; font-size: 14px; color: #6b7280; padding-left: 8px;
}
.field-top { width: 216px; }
.field-sub { width: 192px; margin-left: 20px; }
.tg-row { flex: none; height: 29px; display: flex; align-items: center; margin-top: 0; padding-left: 3px; }
.tg-label { margin: 0 11px 0 11px; color: #374151; }
.select {
  flex: none; width: 192px; height: 32px; margin: 22px 0 0 20px; background: #fff;
  border: 1px solid #d1d5db; border-radius: 5px; display: flex; align-items: center;
  justify-content: space-between; padding: 0 12px 0 9px; color: #374151;
}
.select + .field { margin-top: 8px; }
.tool-hr { flex: none; height: 1px; width: 216px; margin: 12px 0 12px 8px; background: #d1d5db; }
.check-list { flex: none; display: flex; margin: 12px 0 0 20px; height: 60px; }
.checks { flex: 1; display: flex; flex-direction: column; padding-top: 4px; gap: 7px; }
.check-row { display: flex; align-items: center; gap: 9px; height: 17px; color: #374151; }
.box { flex: none; width: 16px; height: 17px; border-radius: 4px; display: flex; align-items: center; justify-content: center; }
.box-mixed { background: #b8b8b8; }
.box-mixed i { width: 9px; height: 2px; background: #fff; }
.box-on { background: #1d4ed8; }
.mini-bar { flex: none; width: 14px; margin-right: 1px; background: #f1f1f1; display: flex; flex-direction: column; align-items: center; padding-top: 7px; }
.mini-thumb { width: 13px; height: 50px; margin-top: 6px; background: #bdbdbd; }
.tool-bar { flex: none; width: 16px; background: #f1f1f1; display: flex; flex-direction: column; align-items: flex-start; padding-top: 7px; }
.tool-bar svg { margin-left: 3px; }
.tool-thumb { width: 13px; height: 77px; margin-top: 6px; background: #c1c1c1; }
.side-tabs { flex: none; width: 32px; border-left: 1px solid #cbd5e1; display: flex; flex-direction: column; background: #f9fafb; }
.side-tab {
  height: 146px; flex: none; display: flex; flex-direction: column; align-items: center; gap: 5px; padding: 36px 3px 0 0;
  border-bottom: 1px solid #cbd5e1; font-size: 14px; color: #1f2937;
}
.side-tab span { writing-mode: vertical-rl; line-height: 16px; }
.side-tab-on { background: #fff; padding-top: 46px; }
```
